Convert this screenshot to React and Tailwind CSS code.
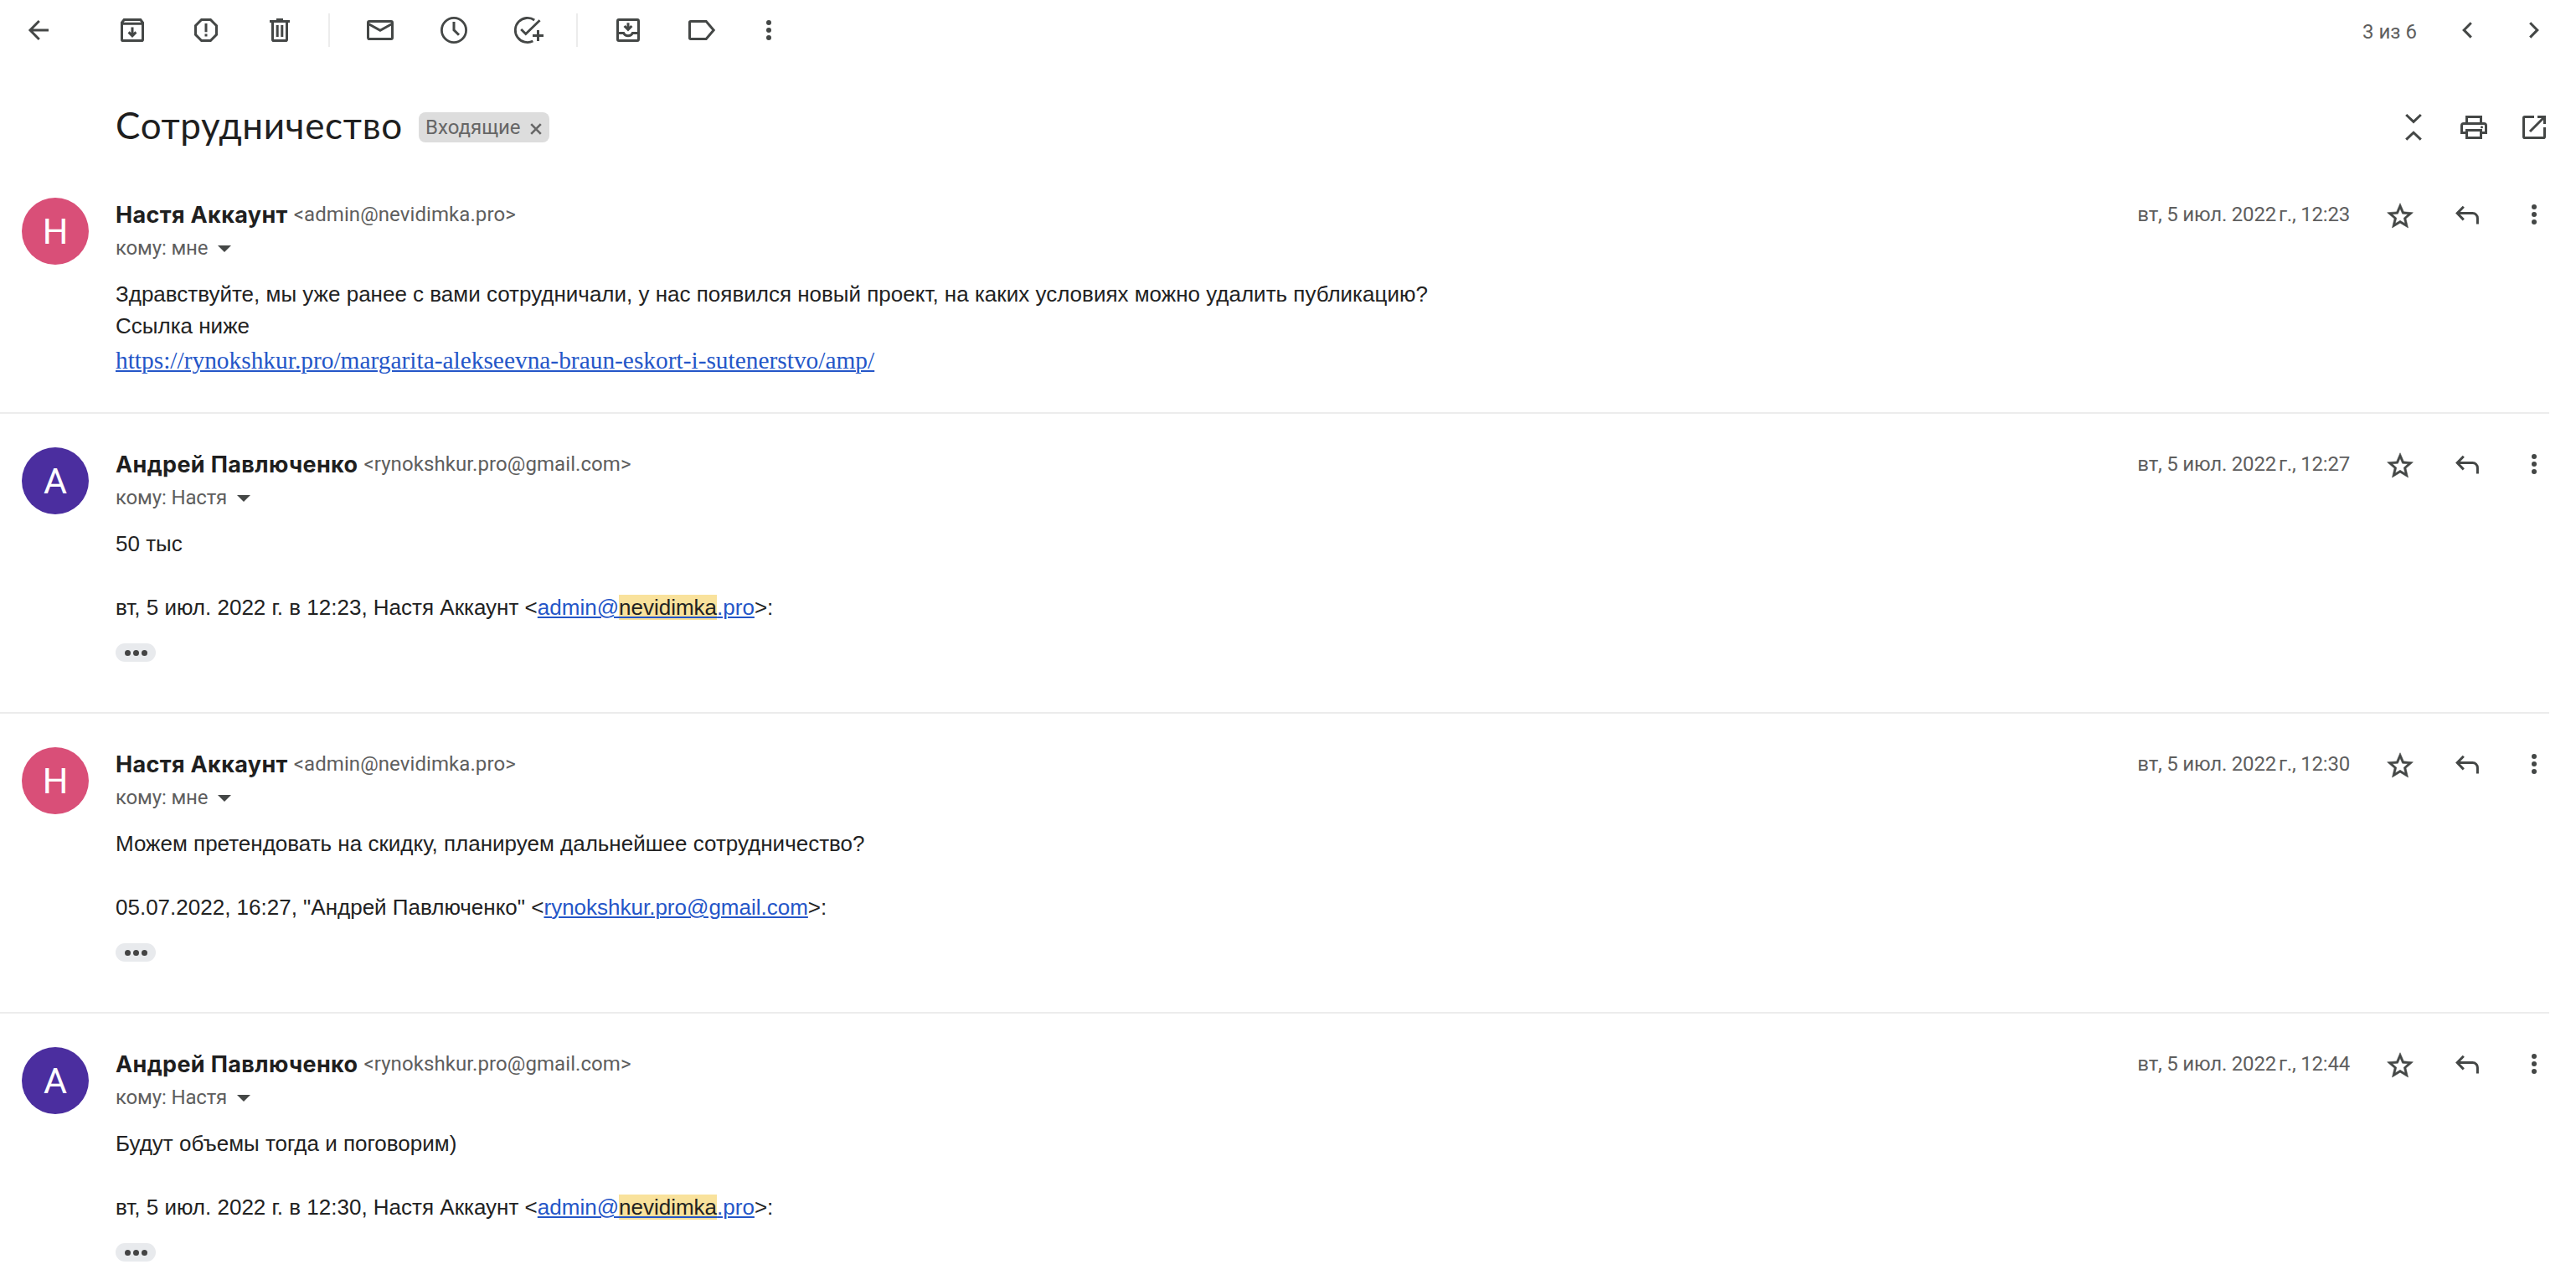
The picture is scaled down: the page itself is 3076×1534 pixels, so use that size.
import React from 'react';

const messages = [
  {
    id: 1,
    name: 'Настя Аккаунт',
    email: 'admin@nevidimka.pro',
    to: 'мне',
    date: 'вт, 5 июл. 2022\u202fг., 12:23',
    letter: 'Н',
    lines: [
      'Здравствуйте, мы уже ранее с вами сотрудничали, у нас появился новый проект, на каких условиях можно удалить публикацию?',
      'Ссылка ниже',
    ],
    link: 'https://rynokshkur.pro/margarita-alekseevna-braun-eskort-i-sutenerstvo/amp/',
  },
  {
    id: 2,
    name: 'Андрей Павлюченко',
    email: 'rynokshkur.pro@gmail.com',
    to: 'Настя',
    date: 'вт, 5 июл. 2022\u202fг., 12:27',
    letter: 'А',
    lines: ['50 тыс'],
    quote: { text: 'вт, 5 июл. 2022 г. в 12:23, Настя Аккаунт', email: ['admin@', 'nevidimka', '.pro'] },
  },
  {
    id: 3,
    name: 'Настя Аккаунт',
    email: 'admin@nevidimka.pro',
    to: 'мне',
    date: 'вт, 5 июл. 2022\u202fг., 12:30',
    letter: 'Н',
    lines: ['Можем претендовать на скидку, планируем дальнейшее сотрудничество?'],
    quote: { text: '05.07.2022, 16:27, "Андрей Павлюченко"', email: ['rynokshkur.pro@gmail.com'] },
  },
  {
    id: 4,
    name: 'Андрей Павлюченко',
    email: 'rynokshkur.pro@gmail.com',
    to: 'Настя',
    date: 'вт, 5 июл. 2022\u202fг., 12:44',
    letter: 'А',
    lines: ['Будут объемы тогда и поговорим)'],
    quote: { text: 'вт, 5 июл. 2022 г. в 12:30, Настя Аккаунт', email: ['admin@', 'nevidimka', '.pro'] },
  },
];

const Icon = ({ children }) => (
  <svg
    viewBox="0 0 20 20"
    fill="none"
    stroke="currentColor"
    strokeWidth="1.5"
    className="w-10 h-10 shrink-0 text-[#444746]"
  >
    {children}
  </svg>
);

const BackIcon = () => (
  <Icon>
    <path d="M10.4 4.5L5 10l5.4 5.5M5.2 10H16" />
  </Icon>
);

const ArchiveIcon = () => (
  <Icon>
    <path d="M3.75 5.5L5.1 3.75h9.8l1.35 1.75v10.1a.65.65 0 0 1-.65.65H4.4a.65.65 0 0 1-.65-.65zM3.75 6.15h12.5" />
    <path d="M10 8.2v5M7.8 11.2l2.2 2.2 2.2-2.2" />
  </Icon>
);

const SpamIcon = () => (
  <Icon>
    <path d="M7.3 3.75h5.4l3.55 3.55v5.4l-3.55 3.55H7.3L3.75 12.7V7.3z" />
    <path d="M10 6v5.1M10 12.3v1.5" />
  </Icon>
);

const TrashIcon = () => (
  <Icon>
    <path d="M4 4.75h12M8 3.75h4M5.75 5v10.6c0 .36.29.65.65.65h7.2c.36 0 .65-.29.65-.65V5M8.6 7v7M11.4 7v7" />
  </Icon>
);

const MailIcon = () => (
  <Icon>
    <rect x="2.75" y="4.75" width="14.5" height="10.5" rx=".7" />
    <path d="M2.75 6.1L10 10.2l7.25-4.1" />
  </Icon>
);

const ClockIcon = () => (
  <Icon>
    <circle cx="10" cy="10" r="7.3" strokeWidth="1.4" />
    <path d="M10 5v4.9l3 3" />
  </Icon>
);

const AddTaskIcon = () => (
  <Icon>
    <path d="M14.1 4A7.3 7.3 0 1 0 13.2 16.55" strokeWidth="1.4" />
    <path d="M6.1 9.5l2.8 2.8 8.4-8.2" strokeWidth="1.4" />
    <path d="M16.25 10v6.5M13 13.25h6.5" />
  </Icon>
);

const MoveToInboxIcon = () => (
  <Icon>
    <rect x="3.75" y="3.75" width="12.5" height="12.5" rx=".7" />
    <path d="M3.75 11.8h3.6c.5 1 1.5 1.6 2.65 1.6s2.15-.6 2.65-1.6h3.6" />
    <path d="M10 5.6v4M7.8 7.5L10 9.7l2.2-2.2" />
  </Icon>
);

const LabelIcon = () => (
  <Icon>
    <path d="M3.4 4.75h9.2L17.1 10l-4.5 5.25H3.4a.65.65 0 0 1-.65-.65V5.4c0-.36.29-.65.65-.65z" />
  </Icon>
);

const MoreIcon = () => (
  <Icon>
    <g fill="currentColor" stroke="none">
      <circle cx="10" cy="5.5" r="1.5" />
      <circle cx="10" cy="10" r="1.5" />
      <circle cx="10" cy="14.5" r="1.5" />
    </g>
  </Icon>
);

const PrevIcon = () => (
  <Icon>
    <path d="M12.4 5.6L8.1 9.95l4.3 4.35" />
  </Icon>
);

const NextIcon = () => (
  <Icon>
    <path d="M7.6 5.6l4.3 4.35-4.3 4.35" />
  </Icon>
);

const CollapseIcon = () => (
  <Icon>
    <path d="M5.6 2.5L10 6.7l4.4-4.2M5.6 17.3L10 13.1l4.4 4.2" />
  </Icon>
);

const PrintIcon = () => (
  <Icon>
    <path d="M5.75 7.5V3.75h8.5V7.5" />
    <path d="M5.5 13.25H2.75V9c0-.75.55-1.25 1.25-1.25h12c.7 0 1.25.5 1.25 1.25v4.25H14.5" />
    <rect x="5.75" y="11.75" width="8.5" height="4.5" />
    <circle cx="14.75" cy="9.9" r=".75" fill="currentColor" stroke="none" />
  </Icon>
);

const OpenInNewIcon = () => (
  <Icon>
    <path d="M10 3.75H4.4a.65.65 0 0 0-.65.65v11.2c0 .36.29.65.65.65h11.2c.36 0 .65-.29.65-.65V10" />
    <path d="M12 3.75h4.25V8M7.5 12.5l8.6-8.6" />
  </Icon>
);

const StarIcon = () => (
  <Icon>
    <path
      fill="currentColor"
      strokeWidth=".35"
      transform="translate(.76 1.8) scale(.77)"
      d="M22 9.24l-7.19-.62L12 2 9.19 8.63 2 9.24l5.46 4.73L5.82 21 12 17.27 18.18 21l-1.63-7.03L22 9.24zM12 15.4l-3.76 2.27 1-4.28-3.32-2.88 4.38-.38L12 6.1l1.71 4.04 4.38.38-3.32 2.88 1 4.28L12 15.4z"
    />
  </Icon>
);

const ReplyIcon = () => (
  <Icon>
    <path d="M7.9 5.4L4.1 9.3l3.8 3.9M4.3 9.3h9c1.6 0 2.9 1.3 2.9 2.9v3.5" />
  </Icon>
);

const Divider = () => <div className="w-[2px] h-10 bg-[#ececec]" />;

const Toolbar = () => (
  <div className="flex items-center justify-between h-[72px] pl-[26px] pr-[30px]">
    <div className="flex items-center">
      <BackIcon />
      <div className="flex items-center gap-12 ml-[72px] mr-[38px]">
        <ArchiveIcon />
        <SpamIcon />
        <TrashIcon />
      </div>
      <Divider />
      <div className="flex items-center gap-12 ml-10 mr-[38px]">
        <MailIcon />
        <ClockIcon />
        <AddTaskIcon />
      </div>
      <Divider />
      <div className="flex items-center gap-12 ml-10 mr-10">
        <MoveToInboxIcon />
        <LabelIcon />
      </div>
      <MoreIcon />
    </div>
    <div className="flex items-center gap-10">
      <span className="pt-1 text-[24px] leading-10 text-[#5e5e5e]">3 из 6</span>
      <PrevIcon />
      <NextIcon />
    </div>
  </div>
);

const Subject = () => (
  <div className="flex items-center justify-between h-[124px] pt-9 pl-[138px] pr-[30px]">
    <div className="flex items-center">
      <h2 className="w-[362px] pb-[6px] font-['Lato',sans-serif] text-[44px] leading-[56px] tracking-[0.7px] text-[#1f1f1f] whitespace-nowrap">
        Сотрудничество
      </h2>
      <div className="flex items-center w-[156px] h-9 pl-2 rounded-lg bg-[#dddddd] text-[24px] leading-9 text-[#666666]">
        Входящие
        <svg viewBox="0 0 14 14" className="w-[14px] h-[14px] ml-[11px] mt-[4px]" fill="none" stroke="currentColor" strokeWidth="2.6">
          <path d="M1.2 1.2l11.6 11.6M12.8 1.2L1.2 12.8" />
        </svg>
      </div>
    </div>
    <div className="flex items-center">
      <CollapseIcon />
      <div className="flex items-center gap-8 ml-8">
        <PrintIcon />
        <OpenInNewIcon />
      </div>
    </div>
  </div>
);

const Quote = ({ text, email }) => (
  <div>
    <div>
      {text} &lt;
      <a className="text-[#2456c8] underline decoration-2 underline-offset-2">
        {email.map((part) =>
          part === 'nevidimka' ? (
            <span key={part} className="bg-[#f9e29c] text-[#222222]">{part}</span>
          ) : (
            part
          )
        )}
      </a>
      &gt;:
    </div>
    <div className="flex items-center justify-center gap-[3px] w-12 h-[22px] mt-6 rounded-full bg-[#e8eaed]">
      <span className="w-[7px] h-[7px] rounded-full bg-[#444444]" />
      <span className="w-[7px] h-[7px] rounded-full bg-[#444444]" />
      <span className="w-[7px] h-[7px] rounded-full bg-[#444444]" />
    </div>
  </div>
);

const Message = ({ message }) => {
  const { name, email, to, date, letter, lines, link, quote } = message;

  return (
    <div>
      <div className={`flex gap-8 pt-10 pl-[26px] pr-[30px] ${quote ? 'h-[356px]' : 'h-[296px]'}`}>
        <div
          className={`flex items-center justify-center w-20 h-20 shrink-0 rounded-full text-[43px] leading-none text-white ${
            letter === 'Н' ? 'bg-[#d94f78]' : 'bg-[#4b2e9f]'
          }`}
        >
          {letter}
        </div>
        <div className="flex-1">
          <div className="flex justify-between h-10">
            <div className="flex gap-[7px] leading-10 whitespace-nowrap">
              <span className="pt-px font-['Inter',sans-serif] text-[27px] font-bold tracking-[0.35px] text-[#1f1f1f]">{name}</span>
              <span className="text-[24px] tracking-[0.08px] text-[#5e5e5e]">&lt;{email}&gt;</span>
            </div>
            <div className="flex items-center gap-10">
              <span className="text-[24px] leading-10 tracking-[-0.2px] text-[#5e5e5e] whitespace-nowrap">{date}</span>
              <StarIcon />
              <ReplyIcon />
              <MoreIcon />
            </div>
          </div>
          <div className="flex items-center h-10 text-[24px] leading-10 tracking-[-0.15px] text-[#5e5e5e]">
            кому: {to}
            <svg viewBox="0 0 16 8" className="w-4 h-2 ml-3 mt-[2px] text-[#444746]" fill="currentColor">
              <path d="M0 0h16L8 8z" />
            </svg>
          </div>
          <div className="mt-4 font-['Liberation_Sans',Arial,sans-serif] text-[26px] leading-[38px] text-[#222222]">
            {lines.map((line) => (
              <div key={line}>{line}</div>
            ))}
            {link && (
              <a className="block font-['Liberation_Serif','Times_New_Roman',serif] text-[29.4px] leading-[44px] text-[#2456c8] underline decoration-2 underline-offset-2">
                {link}
              </a>
            )}
            {quote && (
              <div className="mt-[38px]">
                <Quote text={quote.text} email={quote.email} />
              </div>
            )}
          </div>
        </div>
      </div>
      <div className="h-[2px] mr-8 bg-[#ececec]" />
    </div>
  );
};

const App = () => {
  return (
    <div className="w-full h-[1534px] overflow-hidden bg-white font-['Roboto',sans-serif]">
      <Toolbar />
      <Subject />
      {messages.map((message) => (
        <Message key={message.id} message={message} />
      ))}
    </div>
  );
};

export default App;
